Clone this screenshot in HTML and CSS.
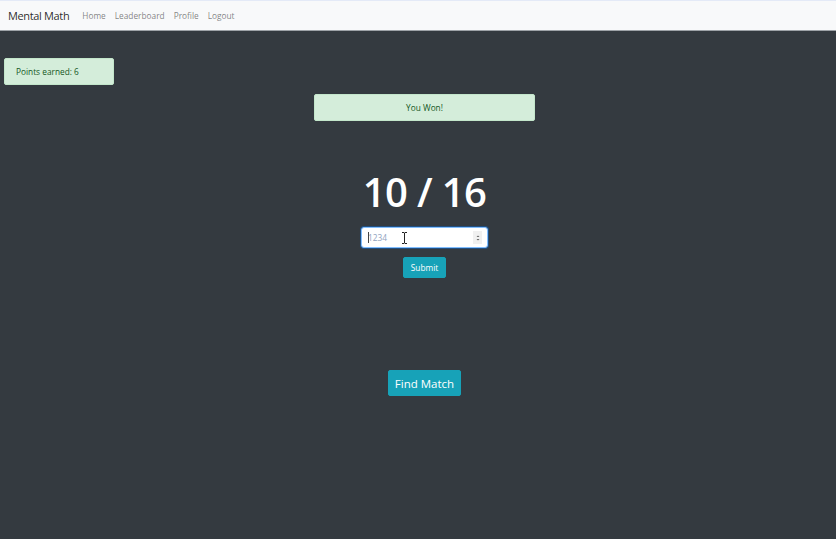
FILE: index.html
```html
<!DOCTYPE html>
<html>
<head>
<meta charset="utf-8">
<title>Mental Math</title>
<link rel="stylesheet" href="styles.css">
</head>
<body>
<nav class="navbar">
  <span class="brand">Mental Math</span>
  <a class="nav-link" href="#">Home</a>
  <a class="nav-link" href="#">Leaderboard</a>
  <a class="nav-link" href="#">Profile</a>
  <a class="nav-link" href="#">Logout</a>
</nav>
<main class="page">
  <div class="alert alert-points">Points earned: 6</div>
  <div class="center">
    <div class="alert alert-won">You Won!</div>
    <h1 class="score">10 / 16</h1>
    <div class="input-wrap">
      <input class="answer" type="number" placeholder="1234">
      <span class="caret"></span>
      <svg class="ibeam" width="7" height="12" viewBox="0 0 7 12"><path d="M1 0.5h2l0.5 0.5 0.5-0.5h2M3.5 1v10M1 11.5h2l0.5-0.5 0.5 0.5h2" fill="none" stroke="#222" stroke-width="1"/></svg>
      <span class="spin"><svg width="6" height="10" viewBox="0 0 6 10"><path d="M1.5 4l1.5-1.5 1.5 1.5z M1.5 6l1.5 1.5 1.5-1.5z" fill="#666"/></svg></span>
    </div>
    <button class="btn btn-submit">Submit</button>
    <button class="btn btn-find">Find Match</button>
  </div>
</main>
</body>
</html>
```
FILE: styles.css
```css
html, body {
  margin: 0;
  padding: 0;
}
body {
  background: #343a40;
  font-family: "Open Sans", "Noto Sans", "DejaVu Sans", sans-serif;
  width: 836px;
  height: 539px;
  overflow: hidden;
}
.navbar {
  box-sizing: border-box;
  height: 31px;
  background: #f8f9fa;
  border-top: 1px solid #e4eaf7;
  border-bottom: 1px solid #9ea3a8;
  display: flex;
  align-items: center;
  padding: 0 0 0 8px;
}
.brand {
  font-size: 11px;
  color: rgba(0,0,0,.85);
  margin-right: 13px;
  letter-spacing: -0.35px;
}
.nav-link {
  font-size: 8.3px;
  color: rgba(0,0,0,.5);
  text-decoration: none;
  margin-right: 9px;
}
.page {
  display: flex;
  flex-direction: column;
}
.alert {
  box-sizing: border-box;
  background: #d4edda;
  border: 1px solid #c3e6cb;
  color: #155724;
  border-radius: 2px;
  font-size: 8.3px;
  display: flex;
  align-items: center;
}
.alert-points {
  margin: 27px 0 0 4px;
  width: 110px;
  height: 27px;
  padding-left: 11px;
}
.center {
  display: flex;
  flex-direction: column;
  align-items: center;
  padding-left: 13px;
}
.alert-won {
  margin-top: 9px;
  width: 221px;
  height: 27px;
  justify-content: center;
}
.score {
  margin: 47px 0 0 0;
  font-size: 40px;
  font-weight: 600;
  line-height: 48px;
  color: #fff;
  letter-spacing: -0.6px;
}
.input-wrap {
  position: relative;
  margin-top: 11px;
  width: 127px;
  height: 21px;
}
.answer {
  display: block;
  box-sizing: border-box;
  width: 127px;
  height: 21px;
  margin: 0;
  border: 1px solid #80bdff;
  border-radius: 3px;
  background: #fff;
  font-family: inherit;
  font-size: 8.3px;
  padding: 0 0 0 6px;
  outline: none;
  box-shadow: 0 0 0 1px rgba(0,123,255,.35);
  -moz-appearance: textfield;
}
.answer::-webkit-inner-spin-button,
.answer::-webkit-outer-spin-button {
  -webkit-appearance: none;
  margin: 0;
}
.answer::placeholder {
  color: #8fa3c0;
}
.caret {
  position: absolute;
  left: 7px;
  top: 5px;
  width: 1px;
  height: 11px;
  background: #444;
}
.ibeam {
  position: absolute;
  left: 40px;
  top: 5px;
}
.spin {
  position: absolute;
  right: 6px;
  top: 4px;
  width: 9px;
  height: 13px;
  background: #f0f0f0;
  display: flex;
  align-items: center;
  justify-content: center;
}
.btn {
  display: block;
  box-sizing: border-box;
  background: #17a2b8;
  border: 1px solid #17a2b8;
  color: #fff;
  font-family: inherit;
  border-radius: 2px;
  padding: 0;
  cursor: pointer;
}
.btn-submit {
  margin-top: 9px;
  width: 43px;
  height: 21px;
  font-size: 8.3px;
}
.btn-find {
  margin-top: 92px;
  width: 73px;
  height: 26px;
  font-size: 11.5px;
}
```
